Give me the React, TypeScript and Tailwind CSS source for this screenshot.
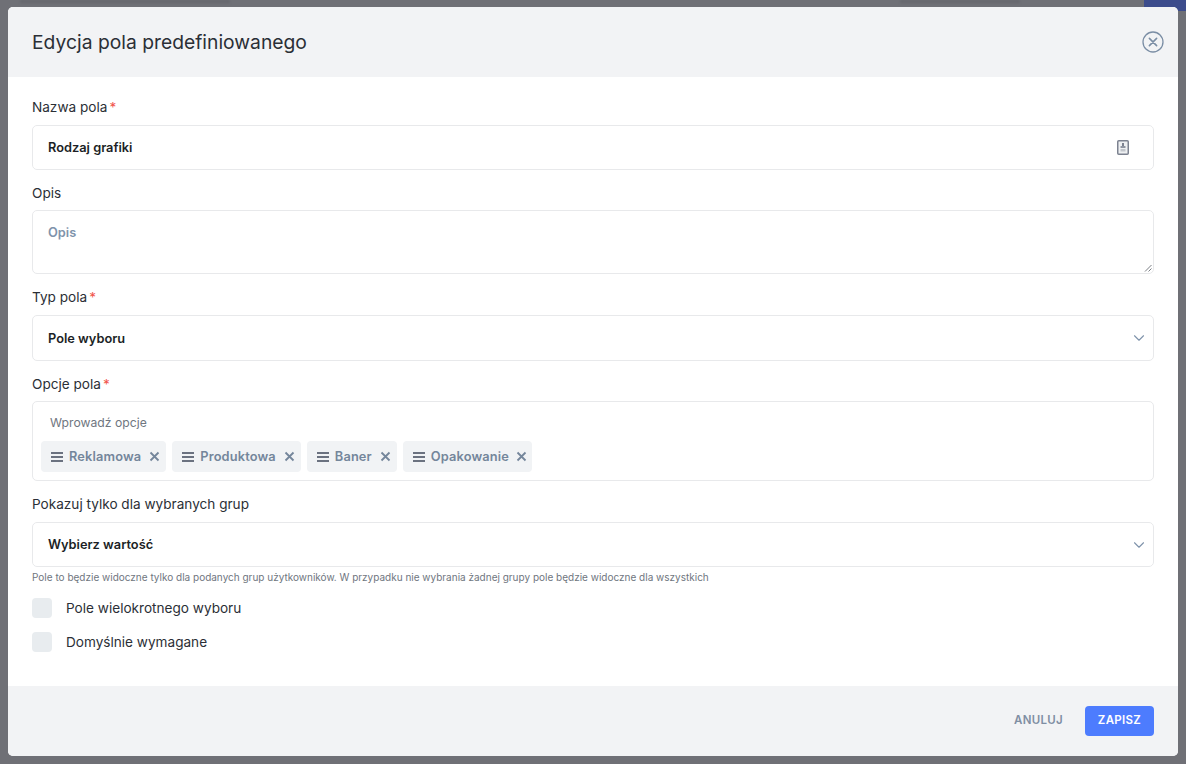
import React from "react";
import { ChevronDown } from "lucide-react";

function Label({ text, required }: { text: string; required?: boolean }) {
  return (
    <div className="h-[18px] text-[13.6px] leading-[18px] text-[#2b2f36]">
      {text}
      {required && <span className="ml-[2px] text-[#f1554c]">*</span>}
    </div>
  );
}

function Select({ value, h }: { value: string; h: string }) {
  return (
    <div className={`${h} flex items-center justify-between rounded-[5px] border border-[#e8e9eb] pl-[15px] pr-[5px]`}>
      <span className="pt-[1px] text-[12.8px] font-semibold text-[#1c1f26]">{value}</span>
      <ChevronDown className="h-[18px] w-[18px] text-[#7f93ab]" strokeWidth={1.5} />
    </div>
  );
}

function Chip({ text, last }: { text: string; last?: boolean }) {
  return (
    <div className={`flex h-[31px] items-center rounded-[4px] bg-[#f1f3f5] pl-[10px] ${last ? "pr-[4px]" : "pr-[5px]"}`}>
      <svg width="12" height="10" viewBox="0 0 12 10" fill="#6b7280" className="shrink-0">
        <rect x="0" y="0" width="12" height="2" />
        <rect x="0" y="4" width="12" height="2" />
        <rect x="0" y="8" width="12" height="2" />
      </svg>
      <span className="ml-[6px] text-[12.8px] font-semibold tracking-[0.15px] text-[#74869b]">{text}</span>
      <svg width="13" height="13" viewBox="0 0 13 13" fill="none" stroke="#74869b" strokeWidth="1.8" className={`${last ? "ml-[6px]" : "ml-[7px]"} shrink-0`}>
        <path d="M2.5 2.5l8 8M10.5 2.5l-8 8" />
      </svg>
    </div>
  );
}

function Check({ text }: { text: string }) {
  return (
    <div className="flex h-[20px] items-center gap-[14px]">
      <div className="h-[20px] w-[20px] rounded-[4px] bg-[#e8ecef]" />
      <span className="text-[13.6px] text-[#2b2f36]">{text}</span>
    </div>
  );
}

export default function App() {
  return (
    <div className="relative h-[764px] w-[1186px] overflow-hidden bg-[#6f7076] font-['Inter',sans-serif]">
      <div className="absolute right-0 top-0 h-[11px] w-[42px] bg-[#3c4c8c]" />
      <div className="absolute left-[20px] top-0 h-[3px] w-[210px] rounded bg-[#66676d] blur-[1px]" />
      <div className="absolute left-[900px] top-0 h-[3px] w-[120px] rounded bg-[#66676d] blur-[1px]" />
      <div className="absolute left-[8px] top-[7px] flex h-[749px] w-[1170px] flex-col overflow-hidden rounded-[5px] bg-white">
        <header className="flex h-[70px] shrink-0 items-center justify-between bg-[#f2f3f5] pl-[24px] pr-[14px]">
          <h1 className="text-[19.3px] font-normal text-[#2b2f36]">Edycja pola predefiniowanego</h1>
          <svg width="22" height="22" viewBox="0 0 22 22" fill="none" stroke="#7b8ea5" strokeWidth="1.3" strokeLinecap="round">
            <circle cx="11" cy="11" r="10" />
            <path d="M7.4 7.4l7.2 7.2M14.6 7.4l-7.2 7.2" strokeWidth="1.6" />
          </svg>
        </header>

        <main className="flex flex-1 flex-col px-[24px] pt-[21px]">
          <Label text="Nazwa pola" required />
          <div className="mt-[9px] flex h-[45px] items-center justify-between rounded-[5px] border border-[#e8e9eb] pl-[15px] pr-[24px]">
            <span className="text-[12.8px] font-semibold text-[#1c1f26]">Rodzaj grafiki</span>
            <svg width="12" height="15" viewBox="0 0 12 15">
              <rect x="0.75" y="0.75" width="10.5" height="13.5" rx="1" fill="#eef0f2" stroke="#7c8290" strokeWidth="1.5" />
              <rect x="5" y="3" width="2" height="3" fill="#7c8290" />
              <rect x="3.5" y="6" width="5" height="2" fill="#8f95a1" />
              <rect x="3.5" y="9" width="5" height="2.5" fill="#c2c6cc" />
            </svg>
          </div>

          <div className="mt-[14px]"><Label text="Opis" /></div>
          <div className="relative mt-[8px] h-[64px] rounded-[5px] border border-[#e8e9eb] pl-[15px] pt-[14px]">
            <span className="block text-[12.8px] font-semibold leading-[16px] text-[#7f93ab]">Opis</span>
            <svg className="absolute bottom-[1px] right-[1px]" width="8" height="8" viewBox="0 0 8 8" stroke="#6b6f76" strokeWidth="0.9">
              <path d="M1 7.5L7.5 1M4.5 7.5L7.5 4.5" />
            </svg>
          </div>

          <div className="mt-[14px]"><Label text="Typ pola" required /></div>
          <div className="mt-[9px]"><Select value="Pole wyboru" h="h-[46px]" /></div>

          <div className="mt-[14px]"><Label text="Opcje pola" required /></div>
          <div className="mt-[8px] h-[80px] rounded-[5px] border border-[#e8e9eb] pl-[8px] pt-[13px]">
            <div className="pl-[9px] text-[12.2px] leading-[16px] text-[#6f7680]">Wprowadź opcje</div>
            <div className="mt-[10px] flex gap-[6px]">
              <Chip text="Reklamowa" />
              <Chip text="Produktowa" />
              <Chip text="Baner" />
              <Chip text="Opakowanie" last />
            </div>
          </div>

          <div className="mt-[14px]"><Label text="Pokazuj tylko dla wybranych grup" /></div>
          <div className="mt-[9px]"><Select value="Wybierz wartość" h="h-[45px]" /></div>
          <p className="mt-[4px] h-[12px] text-[10px] leading-[12px] text-[#6f7680]">
            Pole to będzie widoczne tylko dla podanych grup użytkowników. W przypadku nie wybrania żadnej grupy pole będzie widoczne dla wszystkich
          </p>
          <div className="mt-[15px] flex flex-col gap-[14px]">
            <Check text="Pole wielokrotnego wyboru" />
            <Check text="Domyślnie wymagane" />
          </div>
        </main>

        <footer className="flex h-[70px] shrink-0 items-center justify-end gap-[22px] bg-[#f2f3f5] pr-[24px]">
          <span className="text-[11.5px] font-semibold tracking-[0.3px] text-[#7f8ea3]">ANULUJ</span>
          <button className="h-[30px] w-[69px] rounded-[4px] bg-[#4d7cfe] text-[11.5px] font-semibold tracking-[0.3px] text-white">ZAPISZ</button>
        </footer>
      </div>
    </div>
  );
}
